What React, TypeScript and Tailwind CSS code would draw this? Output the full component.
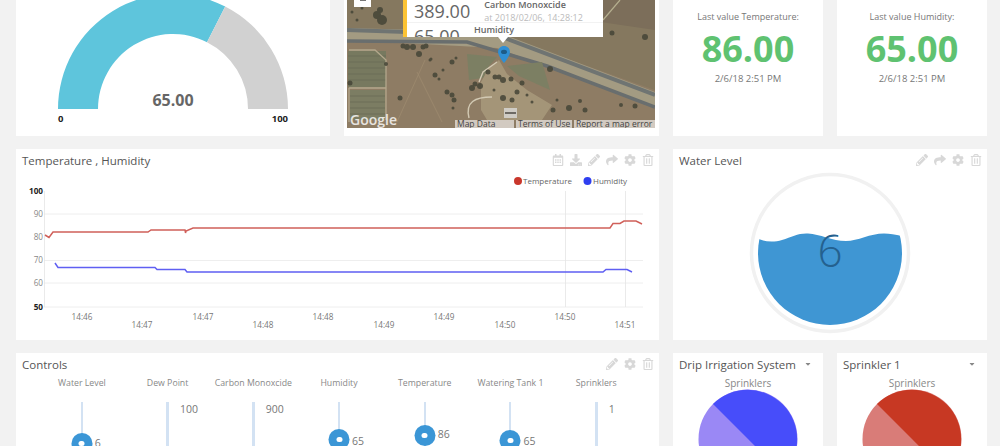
import {
  FaCaretDown,
  FaCog,
  FaDownload,
  FaPencilAlt,
  FaRegCalendarAlt,
  FaRegTrashAlt,
  FaShare,
} from "react-icons/fa";

const trees = [
  [30, 15, 4], [35, 20, 5], [33, 10, 3], [5, 12, 1.5], [15, 8, 1.5], [10, 20, 1.5], [20, 3, 2.5],
  [56, 46, 2.5], [60, 47, 3], [66, 47, 3], [76, 47, 2.5], [72, 54, 3], [79, 46, 2.5], [39, 64, 2],
  [83, 60, 1.5], [84, 59, 1.5], [105, 62, 2.5], [109, 58, 1.5], [88, 75, 2.5], [96, 70, 1.5], [92, 79, 1.5],
  [53, 98, 2.5], [3, 83, 2.5], [100, 92, 2.5], [105, 95, 2.5], [107, 100, 2.5], [106, 108, 1.5],
  [125, 88, 3], [133, 86, 3], [128, 84, 2.5], [141, 72, 2.5], [152, 77, 2.5], [147, 90, 1.5],
  [203, 69, 3], [265, 33, 2.5], [298, 37, 3], [206, 110, 2.5], [222, 108, 3], [238, 110, 2.5],
  [210, 100, 1.5], [185, 102, 1.5], [175, 83, 2.5], [156, 80, 3], [164, 79, 2.5], [148, 77, 2.5],
  [170, 92, 2.5], [156, 98, 3], [165, 100, 2.5], [233, 101, 2], [180, 95, 1.5], [274, 105, 2], [288, 106, 2.5],
];

const controls = [
  { label: "Water Level", track: "w-0.5", handle: "top-[31px]", value: "6", valueTop: "top-[34px]" },
  { label: "Dew Point", track: "w-[3px]", value: "100", valueTop: "top-0" },
  { label: "Carbon Monoxcide", track: "w-[3px]", value: "900", valueTop: "top-0" },
  { label: "Humidity", track: "w-0.5", handle: "top-[27px]", value: "65", valueTop: "top-[32px]" },
  { label: "Temperature", track: "w-0.5", handle: "top-[23px]", value: "86", valueTop: "top-[25px]" },
  { label: "Watering Tank 1", track: "w-0.5", handle: "top-[28px]", value: "65", valueTop: "top-[32px]" },
  { label: "Sprinklers", track: "w-[3px]", value: "1", valueTop: "top-0" },
];

const Toolbar = ({ calendar, download, share }: { calendar?: boolean; download?: boolean; share?: boolean }) => (
  <div className="-mr-px flex items-center gap-[6px] text-[12px] text-[#d8d8d8]">
    {calendar && <FaRegCalendarAlt />}
    {download && <FaDownload />}
    <FaPencilAlt />
    {share && <FaShare />}
    <FaCog />
    <FaRegTrashAlt />
  </div>
);

const CardTitle = ({ title, children }: { title: string; children?: React.ReactNode }) => (
  <div className="flex h-[22px] shrink-0 items-center justify-between px-[6px]">
    <div className="whitespace-nowrap pt-px text-[11.5px] text-[#555]">{title}</div>
    {children}
  </div>
);

const Gauge = () => (
  <div className="h-full w-[314px] bg-white">
    <svg viewBox="16 0 314 136" className="h-full w-full">
      <path d="M58 109A115 115 0 0 1 225.2 6.5L207 42.2A75 75 0 0 0 98 109Z" fill="#5ec5dc" />
      <path d="M225.2 6.5A115 115 0 0 1 288 109H248A75 75 0 0 0 207 42.2Z" fill="#d1d1d1" />
      <text x="173" y="106" textAnchor="middle" fontSize="16" fontWeight="700" fill="#666">65.00</text>
      <text x="58" y="122" fontSize="9.5" fontWeight="700" fill="#222">0</text>
      <text x="288" y="122" textAnchor="end" fontSize="9.5" fontWeight="700" fill="#222">100</text>
    </svg>
  </div>
);

const MapCard = () => (
  <div className="w-[315px] bg-white pb-2 pl-[3px] pr-1">
    <div className="relative h-[128px] overflow-hidden">
      <svg viewBox="0 0 308 128" className="h-full w-full blur-[0.7px]">
        <rect width="308" height="128" fill="#8e7c64" />
        <path d="M0 0H308V90L150 34 0 28Z" fill="#85785f" />
        <path d="M190 0H308V30L240 20Z" fill="#7c6e5a" />
        <path d="M0 28L150 32 308 92V108L150 48 0 40Z" fill="#a39b82" />
        <path d="M0 30L150 35 308 95" fill="none" stroke="#6f7472" strokeWidth="4" />
        <path d="M0 41L120 42 200 66 308 107" fill="none" stroke="#696e6e" strokeWidth="3.5" />
        <path d="M273 0L256 20" stroke="#b5af8f" strokeWidth="1.2" />
        <rect x="1" y="51" width="38" height="36" fill="#77795f" />
        <rect x="3" y="90" width="35" height="30" fill="#7c7d63" />
        <path d="M1 56H39M1 62H39M1 68H39M1 74H39M1 80H39M3 96H38M3 102H38M3 108H38M3 114H38" stroke="#6c6f58" strokeWidth="1" />
        <path d="M2 50H28L39 60V120M2 88H39M2 88V122" fill="none" stroke="#b3a78c" strokeWidth="1.3" />
        <path d="M120 54L150 57 142 66 136 78 122 80Z" fill="#7c7f63" />
        <path d="M160 66L195 62 203 90 172 76Z" fill="#7c7f63" />
        <path d="M152 60L142 68 134 82V110L140 120H195L205 105 180 90 160 74Z" fill="#ae9f80" opacity="0.7" />
        <path d="M150 62L136 72 132 82M122 118C118 102 128 97 145 97" fill="none" stroke="#d2c9b3" strokeWidth="1.4" />
        <path d="M50 122L78 60M95 122L70 72" stroke="#9d8a6f" strokeWidth="0.8" fill="none" />
        <g fill="#454537" opacity="0.85">
          {trees.map(([x, y, r]) => (
            <circle key={`${x}-${y}`} cx={x} cy={y} r={r} />
          ))}
        </g>
        <rect x="157" y="108" width="13" height="10" fill="#cfccc5" />
        <rect x="158" y="112" width="11" height="2" fill="#6d6a64" />
      </svg>
      <svg viewBox="0 0 14 20" className="absolute left-[151px] top-[46px] h-[17px] w-[12px]">
        <path d="M7 0C3 0 0 3 0 7 0 12 7 20 7 20S14 12 14 7C14 3 11 0 7 0Z" fill="#2f8fd4" />
        <ellipse cx="7" cy="7" rx="3.5" ry="2.5" fill="#1d5c88" />
      </svg>
      <div className="absolute left-[7px] top-0 flex h-[7px] w-[17px] items-start justify-center bg-white">
        <div className="h-px w-[6px] bg-[#777]" />
      </div>
      <div className="absolute left-[56px] top-0 h-[37px] w-[200px] overflow-hidden border-l-4 border-[#fcc334] bg-white">
        <div className="flex h-[23px] items-end border-b border-[#f2f2f2] pl-[7px]">
          <span className="-mb-px text-[18px] leading-[24px] text-[#666]">389.00</span>
          <div className="-mb-[2px] ml-[14px] whitespace-nowrap text-[9px] leading-[13px]">
            <div className="font-semibold text-[#666]">Carbon Monoxcide</div>
            <div className="text-[#bbb]">at 2018/02/06, 14:28:12</div>
          </div>
        </div>
        <div className="flex items-start pl-[7px]">
          <span className="mt-px text-[18px] leading-[24px] text-[#666]">65.00</span>
          <span className="ml-[14px] text-[9px] font-semibold leading-[13px] text-[#666]">Humidity</span>
        </div>
      </div>
      <div className="absolute left-[151px] top-[37px] h-0 w-0 border-x-[5px] border-t-[6px] border-x-transparent border-t-white" />
      <div className="absolute bottom-0 left-[3px] text-[14px] font-semibold leading-[17px] text-white/80">Google</div>
      <div className="absolute bottom-0 right-0 flex h-2 gap-[2px] text-[8.5px] leading-[8px] text-[#444]">
        <div className="w-[59px] bg-white/60 pl-[2px]">Map Data</div>
        <div className="w-[56px] bg-white/60 pl-[2px]">Terms of Use</div>
        <div className="w-[81px] bg-white/60 pl-[2px]">Report a map error</div>
      </div>
    </div>
  </div>
);

const LastValue = ({ label, value }: { label: string; value: string }) => (
  <div className="flex w-[150px] flex-col items-center bg-white pt-[10px]">
    <div className="text-[9px] leading-[13px] text-[#777]">{label}</div>
    <div className="mt-[3px] text-[36px] font-bold leading-[46px] text-[#5fc271]">{value}</div>
    <div className="text-[9.5px] leading-[13px] text-[#777]">2/6/18 2:51 PM</div>
  </div>
);

const LineChart = () => {
  const top = [
    ["14:46", 82], ["14:47", 203], ["14:48", 323], ["14:49", 444], ["14:50", 565],
  ] as const;
  const bottom = [
    ["14:47", 142], ["14:48", 263], ["14:49", 384], ["14:50", 505], ["14:51", 625],
  ] as const;
  const yAxis = [[100, 191], [90, 214], [80, 237], [70, 260], [60, 283], [50, 307]] as const;
  return (
    <svg viewBox="16 171 643 169" className="h-[169px] w-[643px]" fontSize="8.2" fill="#777">
      <path d="M44 214H643M44 260.5H643M44 283H643M44 307H643" stroke="#eeeeee" strokeWidth="1" />
      <path d="M44.5 191V307M565.5 191V307M625.5 191V307" stroke="#e4e4e4" strokeWidth="0.8" />
      <path
        d="M45 235L49 237.5 53 232H148L151 230H185L185.5 233 186 231 193 228H610L613 223.5H620L624 221H636L642 224"
        fill="none"
        stroke="#d0605a"
        strokeWidth="1.5"
      />
      <path
        d="M55 263L58 267.5H155L157 269.5H185L187 272H603L606 269.5H627L632 272"
        fill="none"
        stroke="#5f5ff2"
        strokeWidth="1.5"
      />
      {yAxis.map(([v, y]) => (
        <text
          key={v}
          x="43"
          y={y + 3}
          textAnchor="end"
          fontWeight={v === 100 || v === 50 ? 700 : 400}
          fill={v === 100 || v === 50 ? "#222" : "#888"}
        >
          {v}
        </text>
      ))}
      {top.map(([t, x]) => (
        <text key={x} x={x} y="320" textAnchor="middle">{t}</text>
      ))}
      {bottom.map(([t, x]) => (
        <text key={x} x={x} y="328" textAnchor="middle">{t}</text>
      ))}
      <circle cx="518" cy="181" r="4" fill="#c9372c" />
      <text x="523" y="184" fontSize="8" fill="#666">Temperature</text>
      <circle cx="587.5" cy="181" r="4" fill="#2f3ff0" />
      <text x="593" y="184" fontSize="8" fill="#666">Humidity</text>
    </svg>
  );
};

const WaterLevel = () => (
  <svg viewBox="673 171 314 169" className="h-[169px] w-[314px]">
    <defs>
      <clipPath id="tank">
        <circle cx="830" cy="253" r="72" />
      </clipPath>
    </defs>
    <circle cx="830" cy="253" r="78.5" fill="none" stroke="#f1f1f1" strokeWidth="3.5" />
    <path
      clipPath="url(#tank)"
      d="M750 234C760 242 772 243 782 240 792 237 798 233 808 233.5 820 234 832 241 846 241 858 241 870 233.5 884 233.5 892 233.5 898 235 910 238V330H750Z"
      fill="#3f96d3"
    />
    <text x="830" y="267" textAnchor="middle" fontSize="44" fontWeight="300" fill="#24618f">6</text>
  </svg>
);

const Slider = ({ item }: { item: (typeof controls)[number] }) => (
  <div className="flex flex-1 flex-col items-center">
    <div className="h-[14px] whitespace-nowrap text-[8.75px] leading-[14px] text-[#888]">{item.label}</div>
    <div className={`relative mt-3 h-[60px] bg-[#d3e2f3] ${item.track}`}>
      {item.handle && (
        <div className={`absolute left-1/2 flex h-[21px] w-[21px] -translate-x-1/2 items-center justify-center rounded-full bg-[#3b96d6] ${item.handle}`}>
          <div className="h-[5px] w-[6px] rounded-full bg-white" />
        </div>
      )}
      <div className={`absolute left-[14px] text-[10.5px] leading-[14px] text-[#777] ${item.valueTop}`}>{item.value}</div>
    </div>
  </div>
);

const PieCard = ({ title, dark, light }: { title: string; dark: string; light: string }) => (
  <div className="w-[150px] overflow-hidden bg-white">
    <CardTitle title={title}>
      <FaCaretDown className="mr-[5px] shrink-0 text-[8px] text-[#888]" />
    </CardTitle>
    <div className="mt-px h-[14px] text-center text-[10px] leading-[14px] text-[#888]">Sprinklers</div>
    <svg viewBox="0 0 100 100" className="mx-auto -mt-px h-[100px] w-[100px]">
      <circle cx="50" cy="50" r="49.5" fill={light} />
      <path d="M50 50L15 15A49.5 49.5 0 0 1 85 85Z" fill={dark} />
    </svg>
  </div>
);

export default function App() {
  return (
    <div className="flex h-[446px] w-[1000px] flex-col gap-[13px] overflow-hidden bg-[#f2f2f2] pl-4 font-['Open_Sans',sans-serif]">
      <div className="flex h-[136px] shrink-0 gap-[14px]">
        <Gauge />
        <MapCard />
        <LastValue label="Last value Temperature:" value="86.00" />
        <LastValue label="Last value Humidity:" value="65.00" />
      </div>

      <div className="flex h-[191px] shrink-0 gap-[14px]">
        <div className="w-[643px] bg-white">
          <CardTitle title="Temperature , Humidity">
            <Toolbar calendar download share />
          </CardTitle>
          <LineChart />
        </div>
        <div className="w-[314px] bg-white">
          <CardTitle title="Water Level">
            <Toolbar share />
          </CardTitle>
          <WaterLevel />
        </div>
      </div>

      <div className="flex min-h-0 flex-1 gap-[14px]">
        <div className="w-[643px] overflow-hidden bg-white">
          <CardTitle title="Controls">
            <Toolbar />
          </CardTitle>
          <div className="mt-px flex pl-[23px] pr-5">
            {controls.map((item) => (
              <Slider key={item.label} item={item} />
            ))}
          </div>
        </div>
        <PieCard title="Drip Irrigation System" dark="#474dfa" light="#9a88f5" />
        <PieCard title="Sprinkler 1" dark="#c73823" light="#d97c78" />
      </div>
    </div>
  );
}
